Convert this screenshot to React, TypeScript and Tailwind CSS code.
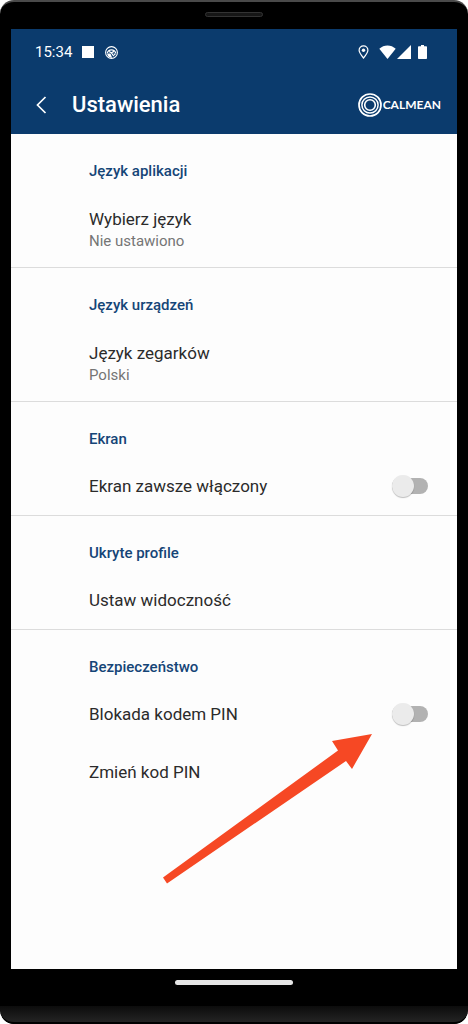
import { useState } from 'react';

interface Item {
  id: string
  title: string
  summary?: string
  toggle?: boolean
}

interface Section {
  heading: string
  items: Item[]
}

const sections: Section[] = [
  { heading: 'Język aplikacji', items: [{ id: 'app-lang', title: 'Wybierz język', summary: 'Nie ustawiono' }] },
  { heading: 'Język urządzeń', items: [{ id: 'watch-lang', title: 'Język zegarków', summary: 'Polski' }] },
  { heading: 'Ekran', items: [{ id: 'screen-on', title: 'Ekran zawsze włączony', toggle: true }] },
  { heading: 'Ukryte profile', items: [{ id: 'visibility', title: 'Ustaw widoczność' }] },
  {
    heading: 'Bezpieczeństwo',
    items: [
      { id: 'pin-lock', title: 'Blokada kodem PIN', toggle: true },
      { id: 'pin-change', title: 'Zmień kod PIN' },
    ],
  },
];

function StatusBar() {
  return (
    <div className="flex items-center justify-between h-[46px] pl-6 pr-[30px]">
      <div className="flex items-center">
        <span className="text-[15px] leading-5">15:34</span>
        <span className="ml-2.5 size-3 bg-white" />
        <svg className="ml-[11px] size-[13px]" viewBox="0 0 13 13" fill="none" stroke="currentColor">
          <circle cx="6.5" cy="6.5" r="5.9" strokeWidth="1.1" />
          <path d="M2.3 7.2a4.3 4.3 0 0 1 8.4 0" strokeWidth="1.3" />
          <path d="M4 5.4l2.4 1.4 2.6-1.4M6.2 6.6l2.6 3.6" strokeWidth="1.2" />
          <path d="M2 7.6h3.4l1.8 4.2A5.2 5.2 0 0 1 2 7.6zM8.4 7.4h2.6l-1.2 2.4z" fill="currentColor" stroke="none" />
        </svg>
      </div>
      <div className="flex items-center">
        <svg className="w-[11px] h-[14px]" viewBox="0 0 11 14" fill="none" stroke="currentColor">
          <path d="M5.5 13C3 10 1.1 7.4 1.1 5.3a4.4 4.4 0 0 1 8.8 0C9.9 7.4 8 10 5.5 13z" strokeWidth="1.2" />
          <circle cx="5.5" cy="5.2" r="1.7" fill="currentColor" stroke="none" />
        </svg>
        <svg className="ml-2.5 w-[17px] h-[14px]" viewBox="0 0 17 14" fill="currentColor">
          <path d="M8.5 14L.3 3.8C2.6 1.6 5.4.4 8.5.4s5.900 1.2 8.200 3.4z" />
        </svg>
        <svg className="ml-px size-[14px]" viewBox="0 0 14 14" fill="currentColor">
          <path d="M14 0v14H0z" />
        </svg>
        <svg className="ml-[7px] w-[9px] h-[14px]" viewBox="0 0 9 14" fill="currentColor">
          <path d="M3 0h3v1.300h2.200a.8.8 0 0 1 .8.8v11.100a.8.8 0 0 1-.8.8H.8a.8.8 0 0 1-.8-.8V2.100a.8.8 0 0 1 .8-.8H3z" />
        </svg>
      </div>
    </div>
  )
}

function Logo() {
  return (
    <div className="flex items-center">
      <svg className="size-6" viewBox="0 0 24 24" fill="none" stroke="currentColor">
        <circle cx="12" cy="12" r="11" strokeWidth="1.7" />
        <circle cx="12" cy="12" r="8.1" strokeWidth="1.5" />
        <circle cx="12" cy="12" r="5.3" strokeWidth="1.6" />
      </svg>
      <span className="ml-px font-[Lato,sans-serif] font-bold text-[12px] leading-4">CALMEAN</span>
    </div>
  )
}

function Row({ item }: { item: Item }) {
  const [checked, setChecked] = useState(false)

  if (item.toggle) {
    return (
      <div className="flex items-center justify-between py-[17px] pl-[78px] pr-[29px]">
        <label htmlFor={item.id} className="text-[17px] leading-6">{item.title}</label>
        <input
          id={item.id}
          type="checkbox"
          checked={checked}
          onChange={(e) => setChecked(e.target.checked)}
          className="relative appearance-none w-9 h-4 rounded-full bg-[#b2b2b2] checked:bg-[#8aa6c4] before:absolute before:-top-[3px] before:left-0 before:size-[22px] before:rounded-full before:bg-[#ebebeb] before:shadow-[0_1px_1px_rgba(0,0,0,0.25)] checked:before:left-[14px] checked:before:bg-[#0b3b6d]"
        />
      </div>
    )
  }

  return (
    <button type="button" className={`block w-full text-left pl-[78px] pr-[29px] ${item.summary ? 'pt-[18px] pb-4' : 'py-[17px]'}`}>
      <span className="block text-[17px] leading-6">{item.title}</span>
      {item.summary && <span className="block text-[15px] leading-5 text-[#757575]">{item.summary}</span>}
    </button>
  )
}

// points at the PIN lock switch
function Arrow() {
  return (
    <svg className="absolute top-[104px] right-[85px] w-[209px] h-[150px] pointer-events-none" viewBox="0 0 209 150" fill="#f64824">
      <path d="M209 0L169 7l6 9.500L0 143.500l4 6L183 27l6 8z" />
    </svg>
  )
}

export default function App() {
  return (
    <div className="bg-white font-[Roboto,sans-serif]">
      <div className="flex flex-col min-h-screen bg-black border-t-2 border-[#4a4a4a] rounded-t-[14px] rounded-b-[14px] overflow-hidden">
        <div className="flex justify-center h-[27px] pt-[10px]">
          <div className="w-[58px] h-[5px] rounded-full border border-[#333] bg-[#161616]" />
        </div>

        <div className="flex flex-col flex-1 mx-[11px] bg-[#fdfdfd] text-[#2b2b2b]">
          <header className="bg-[#0b3b6d] text-white">
            <StatusBar />
            <div className="flex items-center h-[59px] pl-[25px] pr-4">
              <button type="button" aria-label="Wstecz">
                <svg className="w-[11px] h-[18px]" viewBox="0 0 11 18" fill="none" stroke="currentColor" strokeWidth="1.7">
                  <path d="M9.500 1L1.500 9l8 8" />
                </svg>
              </button>
              <h1 className="ml-[25px] flex-1 text-[22px] leading-7 font-medium">Ustawienia</h1>
              <Logo />
            </div>
          </header>

          <main className="flex-1">
            {sections.map((section, i) => (
              <section key={i} className="relative border-b border-[#dcdcdc] last:border-b-0">
                <h2 className="pt-[27px] pb-2 pl-[78px] text-[15px] leading-5 font-medium text-[#154577]">{section.heading}</h2>
                {section.items.map((item) => <Row key={item.id} item={item} />)}
                {i === sections.length - 1 && <Arrow />}
              </section>
            ))}
          </main>
        </div>

        <div className="flex justify-center h-[37px] pt-[11px]">
          <div className="w-[118px] h-[5px] rounded-full bg-[#e6e6e6]" />
        </div>
        <div className="h-[18px] bg-linear-to-b from-[#0c0c0c] to-[#242424] border-b-2 border-black rounded-b-[14px]" />
      </div>
    </div>
  )
}
